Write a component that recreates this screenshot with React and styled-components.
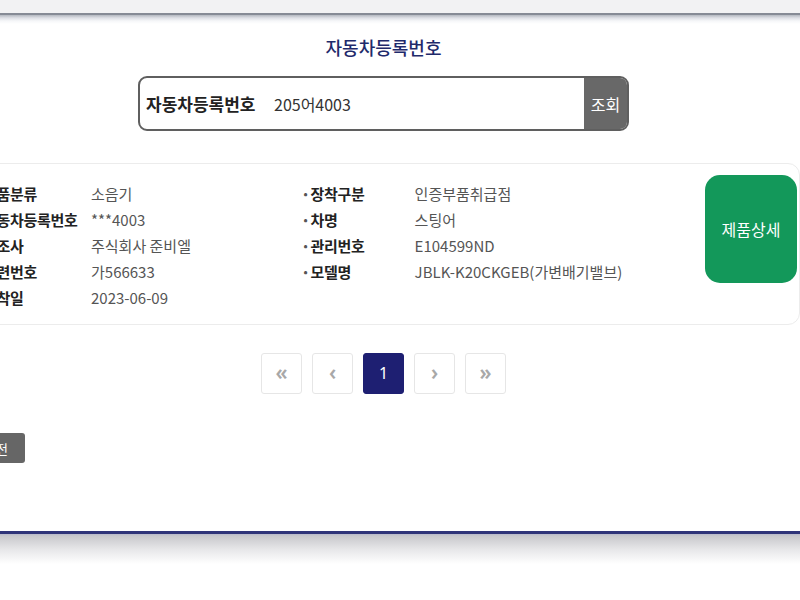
import React from "react";
import styled, { createGlobalStyle } from "styled-components";

const GlobalStyle = createGlobalStyle`
  body {
    margin: 0;
    background: #ffffff;
    font-family: "Noto Sans CJK KR", "Noto Sans", sans-serif;
    overflow: hidden;
  }
`;

const Frame = styled.div`
  width: 800px;
  height: 600px;
  overflow: hidden;
`;

const TopStrip = styled.div`
  height: 13px;
  background: #f2f2f3;
`;

const Panel = styled.div`
  height: 516px;
  border-top: 2px solid #868b95;
  background: linear-gradient(#b4b8c0 0, #dfe1e6 3px, #f6f7f9 6px, #ffffff 9px);
  border-bottom: 3px solid #2f3479;
`;

const BottomShade = styled.div`
  height: 30px;
  background: linear-gradient(#b9bacb 0, #c8c8cc 2px, #e6e6e8 50%, #ffffff);
`;

const Content = styled.div`
  width: 833px;
  margin-left: -33px;
  display: flex;
  flex-direction: column;
  align-items: center;
`;

const Title = styled.h2`
  margin: 19px 0 0;
  font-size: 18px;
  line-height: 26px;
  font-weight: 500;
  color: #1f2a6b;
`;

const SearchBox = styled.div`
  margin-top: 16px;
  width: 487px;
  height: 51px;
  border: 2px solid #5f5f5f;
  border-radius: 9px;
  display: flex;
  align-items: center;
  overflow: hidden;
  background: #fff;
`;

const SearchLabel = styled.span`
  padding-left: 6px;
  font-size: 17px;
  font-weight: 700;
  color: #222;
  width: 128px;
`;

const SearchValue = styled.span`
  flex: 1;
  font-size: 16px;
  color: #333;
`;

const SearchButton = styled.button`
  width: 43px;
  height: 100%;
  border: none;
  background: #686868;
  color: #fff;
  font-family: inherit;
  font-size: 16px;
  padding: 0;
`;

const Card = styled.div`
  margin-top: 32px;
  width: 833px;
  box-sizing: border-box;
  height: 162px;
  border: 1px solid #ececec;
  border-radius: 12px;
  padding: 11px 2px 0 15px;
  display: flex;
  align-items: flex-start;
`;

const InfoColumn = styled.dl`
  margin: 5px 0 0;
  width: ${(p) => p.$width}px;
  display: grid;
  grid-template-columns: ${(p) => p.$label}px 1fr;
  grid-auto-rows: 26px;
  align-items: center;
`;

const Label = styled.dt`
  font-size: 15px;
  font-weight: 700;
  color: #222;
  letter-spacing: -0.3px;
  display: flex;
  align-items: center;

  &::before {
    content: ${(p) => (p.$bullet ? '"•"' : "none")};
    color: #555;
    font-size: 11px;
    margin-right: 3px;
  }
`;

const Value = styled.dd`
  margin: 0;
  font-size: 15px;
  color: #555;
`;

const DetailButton = styled.button`
  width: 92px;
  height: 108px;
  border: none;
  border-radius: 15px;
  background: #13985a;
  color: #fff;
  font-family: inherit;
  font-size: 16px;
  font-weight: 400;
  padding: 0;
`;

const Pagination = styled.div`
  margin-top: 28px;
  display: flex;
  gap: 10px;
`;

const PageButton = styled.button`
  width: 41px;
  height: 41px;
  box-sizing: border-box;
  border: 1px solid ${(p) => (p.$active ? "#1e1f72" : "#e6e6e6")};
  border-radius: 3px;
  background: ${(p) => (p.$active ? "#1e1f72" : "#fff")};
  color: ${(p) => (p.$active ? "#fff" : "#a8a8a8")};
  font-family: "Noto Sans", sans-serif;
  font-size: ${(p) => (p.$active ? "16px" : "21px")};
  font-weight: ${(p) => (p.$active ? 400 : 600)};
  padding: 0 0 2px;
  line-height: 1;
`;

const Footer = styled.div`
  align-self: stretch;
  margin-top: 39px;
`;

const BackButton = styled.button`
  height: 30px;
  width: 58px;
  border: none;
  border-radius: 3px;
  background: #666;
  color: #fff;
  font-family: inherit;
  font-size: 13px;
  padding: 0;
`;

const leftRows = [
  ["제품분류", "소음기"],
  ["자동차등록번호", "***4003"],
  ["제조사", "주식회사 준비엘"],
  ["일련번호", "가566633"],
  ["장착일", "2023-06-09"],
];

const rightRows = [
  ["장착구분", "인증부품취급점"],
  ["차명", "스팅어"],
  ["관리번호", "E104599ND"],
  ["모델명", "JBLK-K20CKGEB(가변배기밸브)"],
];

export default function App() {
  return (
    <Frame>
      <GlobalStyle />
      <TopStrip />
      <Panel>
        <Content>
          <Title>자동차등록번호</Title>
          <SearchBox>
            <SearchLabel>자동차등록번호</SearchLabel>
            <SearchValue>205어4003</SearchValue>
            <SearchButton>조회</SearchButton>
          </SearchBox>
          <Card>
            <InfoColumn $width={321} $label={108}>
              {leftRows.map(([k, v]) => (
                <React.Fragment key={k}>
                  <Label>{k}</Label>
                  <Value>{v}</Value>
                </React.Fragment>
              ))}
            </InfoColumn>
            <InfoColumn $width={402} $label={111}>
              {rightRows.map(([k, v]) => (
                <React.Fragment key={k}>
                  <Label $bullet>{k}</Label>
                  <Value>{v}</Value>
                </React.Fragment>
              ))}
            </InfoColumn>
            <DetailButton>제품상세</DetailButton>
          </Card>
          <Pagination>
            <PageButton>«</PageButton>
            <PageButton>‹</PageButton>
            <PageButton $active>1</PageButton>
            <PageButton>›</PageButton>
            <PageButton>»</PageButton>
          </Pagination>
          <Footer>
            <BackButton>이전</BackButton>
          </Footer>
        </Content>
      </Panel>
      <BottomShade />
    </Frame>
  );
}
